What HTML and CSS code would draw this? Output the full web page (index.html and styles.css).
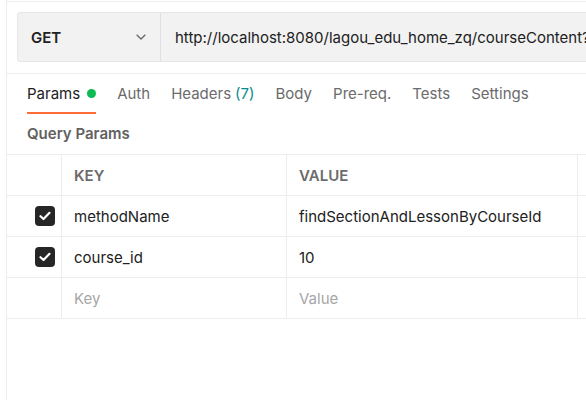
FILE: index.html
```html
<!DOCTYPE html>
<html>
<head>
<meta charset="utf-8">
<link rel="stylesheet" href="styles.css">
</head>
<body>
<div class="pane">
  <div class="urlarea">
    <div class="urlbox">
      <div class="method">
        <span class="method-name">GET</span>
        <svg class="chev" width="10" height="6" viewBox="0 0 10 6"><path d="M0.7 0.7 L5 5 L9.3 0.7" fill="none" stroke="#6b6b6b" stroke-width="1.4"/></svg>
      </div>
      <div class="url">http://localhost:8080/lagou_edu_home_zq/courseContent?methodName=findSectionAndLessonByCourseId&amp;course_id=10</div>
    </div>
  </div>
  <div class="tabs">
    <div class="tab active">Params <span class="dot"></span></div>
    <div class="tab">Auth</div>
    <div class="tab">Headers <span class="count">(7)</span></div>
    <div class="tab">Body</div>
    <div class="tab">Pre-req.</div>
    <div class="tab">Tests</div>
    <div class="tab">Settings</div>
  </div>
  <div class="section-title">Query Params</div>
  <div class="table">
    <div class="row head">
      <div class="cell chk"></div>
      <div class="cell key">KEY</div>
      <div class="cell val">VALUE</div>
      <div class="cell extra"></div>
    </div>
    <div class="row">
      <div class="cell chk"><span class="box"><svg width="12" height="10" viewBox="0 0 12 10"><path d="M1.5 5.2 L4.5 8 L10.5 1.8" fill="none" stroke="#fff" stroke-width="2.2" stroke-linecap="round" stroke-linejoin="round"/></svg></span></div>
      <div class="cell key">methodName</div>
      <div class="cell val">findSectionAndLessonByCourseId</div>
      <div class="cell extra"></div>
    </div>
    <div class="row">
      <div class="cell chk"><span class="box"><svg width="12" height="10" viewBox="0 0 12 10"><path d="M1.5 5.2 L4.5 8 L10.5 1.8" fill="none" stroke="#fff" stroke-width="2.2" stroke-linecap="round" stroke-linejoin="round"/></svg></span></div>
      <div class="cell key">course_id</div>
      <div class="cell val">10</div>
      <div class="cell extra"></div>
    </div>
    <div class="row">
      <div class="cell chk"></div>
      <div class="cell key ph">Key</div>
      <div class="cell val ph">Value</div>
      <div class="cell extra"></div>
    </div>
  </div>
</div>
</body>
</html>
```
FILE: styles.css
```css
html, body {
  margin: 0;
  padding: 0;
  background: #fff;
  overflow: hidden;
}
body {
  font-family: Inter, "Noto Sans", sans-serif;
  font-size: 15px;
  color: #212121;
  width: 586px;
  height: 400px;
}
.pane {
  margin-left: 6px;
  border-left: 1px solid #ededed;
  height: 400px;
  padding-top: 1px;
  box-sizing: border-box;
}
.urlarea {
  border-top: 1px solid #ededed;
  border-bottom: 1px solid #ededed;
  padding: 10px 0 11px 10px;
}
.urlbox {
  display: flex;
  height: 50px;
  box-sizing: border-box;
  background: #f2f2f2;
  border: 1px solid #e6e6e6;
  border-right: none;
  border-radius: 4px 0 0 4px;
  overflow: hidden;
}
.method {
  width: 143px;
  flex: none;
  display: flex;
  align-items: center;
  justify-content: space-between;
  padding: 0 14px 0 13px;
  box-sizing: border-box;
  border-right: 1px solid #e0e0e0;
}
.method-name {
  font-weight: 600;
  color: #212121;
}
.chev { display: block; }
.url {
  display: flex;
  align-items: center;
  padding-left: 14px;
  white-space: nowrap;
  color: #212121;
}
.tabs {
  display: flex;
  gap: 21px;
  padding: 0 20px;
  height: 40px;
}
.tab {
  display: flex;
  align-items: center;
  color: #6b6b6b;
  white-space: nowrap;
  padding-top: 1px;
  border-bottom: 2px solid transparent;
}
.tab.active {
  color: #212121;
  border-bottom-color: #ff6c37;
}
.dot {
  display: inline-block;
  width: 9px;
  height: 9px;
  border-radius: 50%;
  background: #0cbb52;
  margin-left: 7px;
}
.count { color: #0a8c8c; margin-left: 4px; }
.section-title {
  font-weight: 600;
  color: #616161;
  padding: 10px 20px 0;
  height: 30px;
}
.table {
  border-top: 1px solid #ededed;
}
.row {
  display: flex;
  height: 41px;
  border-bottom: 1px solid #ededed;
  box-sizing: border-box;
}
.cell {
  display: flex;
  align-items: center;
  box-sizing: border-box;
  white-space: nowrap;
}
.chk {
  width: 55px;
  border-right: 1px solid #ededed;
  justify-content: flex-end;
  padding-right: 6px;
}
.key {
  width: 225px;
  border-right: 1px solid #ededed;
  padding-left: 12px;
}
.val {
  width: 291px;
  border-right: 1px solid #ededed;
  padding-left: 12px;
}
.extra { flex: 1; }
.head .cell.key, .head .cell.val {
  font-weight: 600;
  color: #6b6b6b;
}
.ph { color: #a6a6a6; }
.box {
  width: 20px;
  height: 20px;
  border-radius: 4px;
  background: #262626;
  display: flex;
  align-items: center;
  justify-content: center;
}
```
